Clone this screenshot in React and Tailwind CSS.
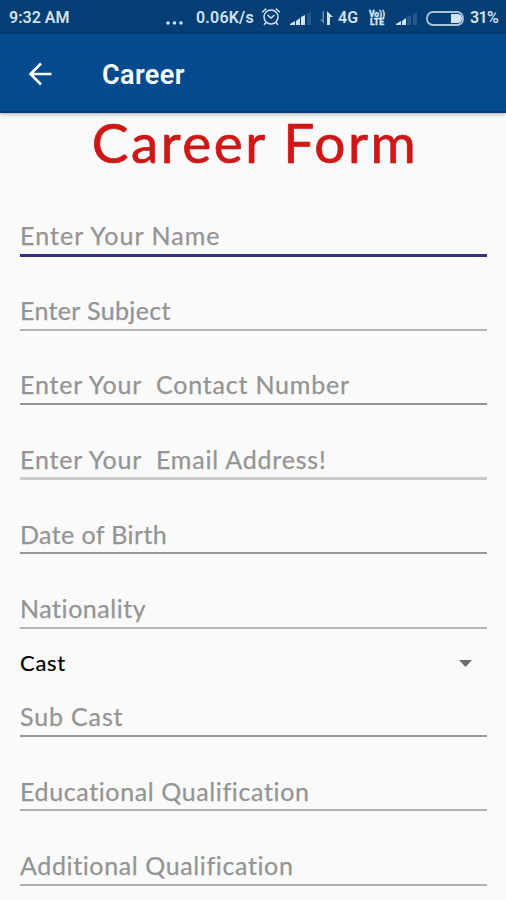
import React from "react";

const fields = [
  { label: "Enter Your Name", box: "h-[61px] pb-[4px] border-b-3 border-[#30338d]", text: "tracking-[1.05px]" },
  { label: "Enter Subject", box: "h-[74px] pb-[4px] border-b-2 border-[#b4b4b4]", text: "tracking-[0.35px]" },
  { label: "Enter Your\u00a0 Contact Number", box: "h-[74px] pb-[4px] border-b-2 border-[#939393]", text: "tracking-[0.8px]" },
  { label: "Enter Your\u00a0 Email Address!", box: "h-[75px] pb-[3px] border-b-3 border-[#cbcbcb]", text: "tracking-[0.8px]" },
  { label: "Date of Birth", box: "h-[74px] pb-[3px] border-b-2 border-[#989898]", text: "tracking-[0.4px]" },
  { label: "Nationality", box: "h-[75px] pb-[4px] border-b-2 border-[#b4b4b4]", text: "tracking-[0.55px]" },
];

const moreFields = [
  { label: "Sub Cast", box: "h-[60px] pb-[4px] border-b-2 border-[#989898]", text: "tracking-[0.85px]" },
  { label: "Educational Qualification", box: "h-[74px] pb-[3px] border-b-2 border-[#b0b0b0]", text: "tracking-[0.62px]" },
  { label: "Additional Qualification", box: "h-[75px] pb-[4px] border-b-2 border-[#b0b0b0]", text: "tracking-[0.62px]" },
];

function Field({ label, box, text }) {
  return (
    <div className={`flex shrink-0 items-end ${box}`}>
      <span className={`whitespace-nowrap text-[25px] leading-[30px] text-[#949494] [-webkit-text-stroke:0.25px_#949494] ${text}`}>{label}</span>
    </div>
  );
}

function Signal({ className, lit }) {
  const bars = ["M0 14h5v-4l-5 3z", "M6 14h4V7l-4 3z", "M11 14h4V4l-4 2z", "M17 14h4V1l-4 2z"];
  return (
    <svg className={className} width="22" height="15" viewBox="0 0 22 15">
      {bars.map((d, i) => (
        <path key={d} d={d} fill={i < lit ? "#d3e2f1" : "#24588a"} />
      ))}
    </svg>
  );
}

function StatusBar() {
  return (
    <div className="flex h-[34px] shrink-0 items-center bg-[#033e74] pt-[2px] font-['Roboto',sans-serif] text-[16px] font-semibold leading-5 text-[#d3e2f1]">
      <span className="ml-[9px] w-[157px] whitespace-nowrap">9:32 AM</span>
      <svg width="18" height="18" viewBox="0 0 18 18" fill="#d3e2f1">
        <circle cx="2" cy="14" r="1.8" />
        <circle cx="8.5" cy="14" r="1.8" />
        <circle cx="15" cy="14" r="1.8" />
      </svg>
      <span className="ml-[12px] w-[65px] whitespace-nowrap tracking-[0.2px]">0.06K/s</span>
      <svg className="mb-[2px]" width="20" height="20" viewBox="0 0 20 20" fill="none" stroke="#d3e2f1" strokeWidth="1.5">
        <circle cx="10" cy="10" r="7" />
        <path d="M6.500 8l3.500 3 3.500-3M1.200 5.200l4-3.600M18.800 5.200l-4-3.600M5 15.500l-2 2.200M15 15.500l2 2.200" />
      </svg>
      <Signal className="ml-[9px]" lit={3} />
      <svg className="ml-[8px]" width="14" height="16" viewBox="0 0 14 16">
        <path d="M4 1v13L0 9.500h2.500V1z" fill="#668db0" />
        <path d="M7 15V1l6 6h-3v8z" fill="#d3e2f1" />
      </svg>
      <span className="ml-[4px] w-[29px]">4G</span>
      <div className="flex h-[18px] w-[20px] flex-col items-center justify-center text-[8.5px] font-black leading-[8.5px] [-webkit-text-stroke:0.3px_#d3e2f1]">
        <span>Vo))</span>
        <span>LTE</span>
      </div>
      <Signal className="ml-[9px]" lit={2} />
      <svg className="ml-[8px]" width="38" height="15" viewBox="0 0 38 15">
        <rect x="1" y="1" width="36" height="13" rx="6" fill="none" stroke="#a9c2da" strokeWidth="1.8" />
        <path d="M25 3h6.500a4.500 4.500 0 010 9H25z" fill="#d3e2f1" />
      </svg>
      <span className="ml-[6px] whitespace-nowrap tracking-[-0.6px]">31%</span>
    </div>
  );
}

export default function App() {
  return (
    <div className="flex h-[900px] w-[506px] flex-col overflow-hidden bg-[#fafafa] font-['Lato',sans-serif]">
      <StatusBar />
      <header className="flex h-[79px] shrink-0 items-center border-b-2 border-[#083777] bg-[#034a8e] pt-[2px] shadow-[0_1px_4px_rgba(0,0,0,0.35)]">
        <svg className="ml-[28px]" width="24" height="24" viewBox="0 0 24 24" fill="none" stroke="#fff" strokeWidth="2.6">
          <path d="M23.500 12H3M13 1.500L2.500 12 13 22.500" />
        </svg>
        <h1 className="ml-[50px] pt-[3px] font-['Roboto',sans-serif] text-[27px] font-semibold leading-8 tracking-[0.4px] text-white">Career</h1>
      </header>
      <main className="flex flex-col pl-5 pr-[19px]">
        <h2 className="h-[83px] whitespace-nowrap pl-[3px] text-center text-[55px] leading-[59px] tracking-[2.5px] text-[#cf1717] [-webkit-text-stroke:0.7px_#cf1717]">Career Form</h2>
        {fields.map((f) => (
          <Field key={f.label} {...f} />
        ))}
        <div className="flex h-[48px] shrink-0 items-center justify-between pr-[15px] pt-[19px]">
          <span className="text-[22px] leading-[28px] tracking-[0.7px] text-black [-webkit-text-stroke:0.2px_#000]">Cast</span>
          <svg className="mt-[2px]" width="13" height="7" viewBox="0 0 13 7">
            <path d="M0 0h13L6.500 7z" fill="#6b6b6b" />
          </svg>
        </div>
        {moreFields.map((f) => (
          <Field key={f.label} {...f} />
        ))}
      </main>
    </div>
  );
}
